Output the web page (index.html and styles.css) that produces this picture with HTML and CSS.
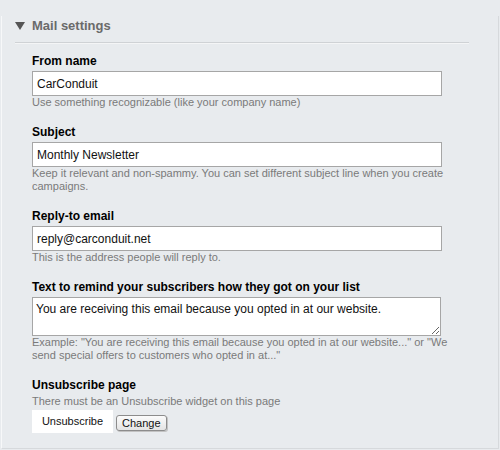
FILE: index.html
```html
<!DOCTYPE html>
<html>
<head>
<meta charset="utf-8">
<link rel="stylesheet" href="styles.css">
</head>
<body>
<div class="panel">
  <div class="section">
    <div class="heading">
      <svg class="caret" width="10" height="8" viewBox="0 0 10 8"><path d="M0 0H10L5 8Z" fill="#555"/></svg>
      <span>Mail settings</span>
    </div>

    <div class="field">
      <label class="label">From name</label>
      <input class="text" type="text" value="CarConduit">
      <p class="hint">Use something recognizable (like your company name)</p>
    </div>

    <div class="field">
      <label class="label">Subject</label>
      <input class="text" type="text" value="Monthly Newsletter">
      <p class="hint">Keep it relevant and non-spammy. You can set different subject line when you create campaigns.</p>
    </div>

    <div class="field">
      <label class="label">Reply-to email</label>
      <input class="text" type="text" value="reply@carconduit.net">
      <p class="hint">This is the address people will reply to.</p>
    </div>

    <div class="field">
      <label class="label">Text to remind your subscribers how they got on your list</label>
      <textarea class="area">You are receiving this email because you opted in at our website.</textarea>
      <p class="hint">Example: "You are receiving this email because you opted in at our website..." or "We send special offers to customers who opted in at..."</p>
    </div>

    <div class="field">
      <label class="label">Unsubscribe page</label>
      <p class="hint">There must be an Unsubscribe widget on this page</p>
      <div class="unsub-row">
        <span class="unsub-box">Unsubscribe</span>
        <button class="btn" type="button">Change</button>
      </div>
    </div>
  </div>
</div>
</body>
</html>
```

FILE: styles.css
```css
html, body {
  margin: 0;
  padding: 0;
  background: #e8ebee;
  font-family: "Liberation Sans", Arial, sans-serif;
  width: 500px;
  height: 450px;
  overflow: hidden;
}

.panel {
  margin: 16px 0 0 1px;
  width: 498px;
  height: 433px;
  box-sizing: border-box;
  border-left: 1px solid #f7f8f9;
  border-right: 1px solid #d6d9dc;
  border-bottom: 1px solid #d6d9dc;
}

.section {
  padding: 0 29px 0 30px;
}

.heading {
  display: flex;
  align-items: center;
  margin-left: -17px;
  padding-left: 17px;
  height: 18px;
  padding-top: 1px;
  padding-bottom: 7px;
  border-bottom: 1px solid #cfd2d5;
  box-shadow: 0 1px 0 #f4f5f6;
  font-size: 13px;
  font-weight: bold;
  color: #6a6a6a;
  line-height: 18px;
}

.heading .caret {
  margin-left: -17px;
  margin-right: 7px;
  margin-top: 0;
  display: block;
}

.field {
  display: flex;
  flex-direction: column;
  align-items: flex-start;
  margin-top: 16px;
}

.heading + .field {
  margin-top: 11px;
}

.label {
  display: block;
  font-size: 12px;
  font-weight: bold;
  line-height: 15px;
  color: #000;
  margin-bottom: 2px;
}

.text {
  box-sizing: border-box;
  width: 410px;
  height: 25px;
  margin: 0;
  border: 1px solid #a6a6a6;
  padding: 0 4px;
  font-family: "Liberation Sans", Arial, sans-serif;
  font-size: 12px;
  color: #111;
  background: #fff;
  outline: none;
}

.area {
  box-sizing: border-box;
  width: 409px;
  height: 39px;
  margin: 0;
  border: 1px solid #a6a6a6;
  padding: 4px 3px 2px;
  font-family: "Liberation Sans", Arial, sans-serif;
  font-size: 12px;
  line-height: 15px;
  color: #111;
  background: #fff;
  resize: both;
  outline: none;
  display: block;
}

.hint {
  margin: 0;
  font-size: 11px;
  line-height: 13px;
  color: #7a7a7a;
  width: 437px;
}

.unsub-row {
  display: flex;
  align-items: flex-end;
  margin-top: 2px;
}

.unsub-box {
  display: block;
  background: #fff;
  width: 81px;
  height: 23px;
  line-height: 23px;
  text-align: center;
  font-size: 11px;
  color: #111;
}

.btn {
  margin: 0 0 2px 3px;
  height: 16px;
  box-sizing: border-box;
  padding: 0 5px;
  border: 1px solid #8c8c8c;
  border-radius: 3px;
  background: linear-gradient(#fbfbfb, #e4e4e4);
  box-shadow: 1px 1px 0 #c2c2c2;
  font-family: "Liberation Sans", Arial, sans-serif;
  font-size: 11px;
  line-height: 14px;
  color: #111;
}
```
